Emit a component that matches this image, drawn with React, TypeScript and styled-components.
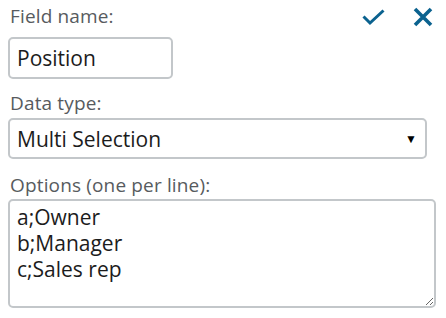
import * as React from "react";
import styled, { createGlobalStyle } from "styled-components";

const GlobalStyle = createGlobalStyle`
  html, body {
    margin: 0;
    padding: 0;
    background: #ffffff;
  }
  body {
    font-family: "Open Sans", "Liberation Sans", sans-serif;
  }
`;

const Form = styled.div`
  display: flex;
  flex-direction: column;
  padding: 4px 10px 0 8px;
  width: 446px;
  box-sizing: border-box;
`;

const HeaderRow = styled.div`
  display: flex;
  align-items: center;
  justify-content: space-between;
`;

const Label = styled.label<{ $top?: number }>`
  display: block;
  margin-top: ${(p) => p.$top ?? 0}px;
  font-size: 19px;
  line-height: 24px;
  letter-spacing: 0.15px;
  color: #575b5e;
  padding-left: 2px;
`;

const Actions = styled.div`
  display: flex;
  align-items: center;
  gap: 28px;
  margin: 2px 3px 0 0;
`;

const IconButton = styled.button`
  display: flex;
  align-items: center;
  justify-content: center;
  padding: 0;
  border: none;
  background: none;
  cursor: pointer;
  color: #0b628f;
`;

const fieldBase = `
  box-sizing: border-box;
  border: 2px solid #c3c7ca;
  border-radius: 5px;
  background: #fff;
  font-family: "Open Sans", "Liberation Sans", sans-serif;
  font-size: 21px;
  color: #1c1c1c;
  outline: none;
`;

const TextInput = styled.input`
  ${fieldBase}
  width: 165px;
  height: 42px;
  margin-top: 9px;
  padding: 0 7px;
`;

const SelectBox = styled.div`
  ${fieldBase}
  display: flex;
  align-items: center;
  justify-content: space-between;
  width: 419px;
  height: 41px;
  margin-top: 3px;
  padding: 0 7px;
`;

const Caret = styled.span`
  font-size: 12px;
  color: #000;
  margin-right: 1px;
`;

const Options = styled.textarea`
  ${fieldBase}
  width: 428px;
  height: 109px;
  margin-top: 2px;
  padding: 3px 7px;
  line-height: 26px;
  resize: vertical;
`;

export default function App() {
  const [name, setName] = React.useState("Position");
  const [options, setOptions] = React.useState(
    "a;Owner\nb;Manager\nc;Sales rep"
  );

  return (
    <>
      <GlobalStyle />
      <Form>
        <HeaderRow>
          <Label>Field name:</Label>
          <Actions>
            <IconButton aria-label="Save">
              <svg width="23" height="17" viewBox="0 0 23 17">
                <path
                  d="M1.5 7.5 L8 14 L21.5 1.5"
                  fill="none"
                  stroke="currentColor"
                  strokeWidth="3"
                />
              </svg>
            </IconButton>
            <IconButton aria-label="Cancel">
              <svg width="20" height="20" viewBox="0 0 20 20">
                <path
                  d="M2 2 L18 18 M18 2 L2 18"
                  fill="none"
                  stroke="currentColor"
                  strokeWidth="3.6"
                />
              </svg>
            </IconButton>
          </Actions>
        </HeaderRow>
        <TextInput value={name} onChange={(e) => setName(e.target.value)} />
        <Label $top={12}>Data type:</Label>
        <SelectBox>
          <span>Multi Selection</span>
          <Caret>▼</Caret>
        </SelectBox>
        <Label $top={14}>Options (one per line):</Label>
        <Options
          value={options}
          onChange={(e) => setOptions(e.target.value)}
        />
      </Form>
    </>
  );
}
